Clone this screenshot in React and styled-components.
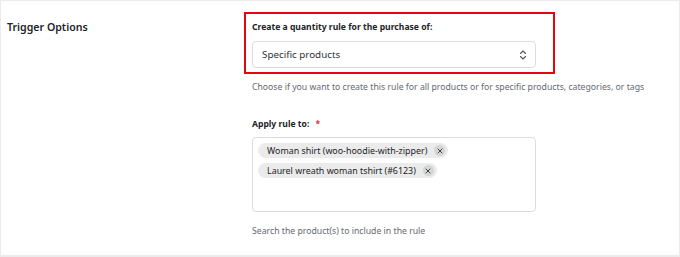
import styled, { createGlobalStyle } from 'styled-components';

const GlobalStyle = createGlobalStyle`
  html, body {
    margin: 0;
    padding: 0;
    background: #ebebeb;
  }
  body {
    font-family: "Noto Sans", "Open Sans", sans-serif;
    color: #1d2327;
  }
`;

const Card = styled.div`
  margin: 1px 0 0 1px;
  width: 678px;
  height: 254px;
  background: #fff;
  box-sizing: border-box;
  display: grid;
  grid-template-columns: 243px 1fr;
`;

const SectionTitle = styled.h2`
  margin: 0;
  padding: 19px 0 0 6px;
  font-size: 10.6px;
  line-height: 14px;
  font-weight: 600;
  color: #1d2327;
`;

const Fields = styled.div`
  padding-top: 11px;
  display: flex;
  flex-direction: column;
`;

const Highlight = styled.div`
  width: 311px;
  box-sizing: border-box;
  border: 2px solid #e30613;
  padding: 7px 0 4px 6px;
`;

const Label = styled.label`
  display: block;
  font-size: 8.6px;
  font-weight: 700;
  line-height: 12px;
  color: #1d2327;
  margin-bottom: ${(p) => p.$gap}px;
`;

const Required = styled.span`
  color: #d63638;
  margin-left: 6px;
`;

const Select = styled.div`
  width: 284px;
  height: 27px;
  box-sizing: border-box;
  border: 1px solid #dcdcde;
  border-radius: 4px;
  display: flex;
  align-items: center;
  justify-content: space-between;
  padding: 0 8px 0 9px;
  font-size: 9.8px;
  color: #2c3338;
`;

const Help = styled.p`
  margin: ${(p) => p.$top}px 0 0 8px;
  font-size: 8.7px;
  line-height: 14px;
  white-space: nowrap;
  color: #646970;
`;

const Group = styled.div`
  margin-top: ${(p) => p.$top}px;
  padding-left: 8px;
`;

const TagBox = styled.div`
  width: 284px;
  height: 75px;
  box-sizing: border-box;
  border: 1px solid #dcdcde;
  border-radius: 4px;
  padding: 5px 5px;
  display: flex;
  flex-direction: column;
  align-items: flex-start;
  gap: 5px;
`;

const Chip = styled.span`
  display: inline-flex;
  align-items: center;
  height: 15px;
  background: #ebebeb;
  border-radius: 8px;
  padding: 0 3px 0 9px;
  font-size: 8.9px;
  color: #1d2327;
  gap: 7px;
`;

const Remove = styled.span`
  width: 11px;
  height: 11px;
  border-radius: 50%;
  background: #d5d5d5;
  display: inline-flex;
  align-items: center;
  justify-content: center;
`;

function Chevrons() {
  return (
    <svg width="8" height="12" viewBox="0 0 8 12" fill="none" stroke="#50575e" strokeWidth="1.1" strokeLinecap="round" strokeLinejoin="round">
      <path d="M1.5 4.5 L4 2 L6.5 4.5" />
      <path d="M1.5 7.5 L4 10 L6.5 7.5" />
    </svg>
  );
}

function Cross() {
  return (
    <svg width="6" height="6" viewBox="0 0 6 6" stroke="#3c434a" strokeWidth="1" strokeLinecap="round">
      <path d="M1 1 L5 5 M5 1 L1 5" />
    </svg>
  );
}

const tags = ['Woman shirt (woo-hoodie-with-zipper)', 'Laurel wreath woman tshirt (#6123)'];

export default function App() {
  return (
    <>
      <GlobalStyle />
      <Card>
        <SectionTitle>Trigger Options</SectionTitle>
        <Fields>
          <Highlight>
            <Label $gap={8}>Create a quantity rule for the purchase of:</Label>
            <Select>
              <span>Specific products</span>
              <Chevrons />
            </Select>
          </Highlight>
          <Help $top={6}>
            Choose if you want to create this rule for all products or for specific products, categories, or tags
          </Help>
          <Group $top={24}>
            <Label $gap={7}>
              Apply rule to:<Required>*</Required>
            </Label>
            <TagBox>
              {tags.map((t) => (
                <Chip key={t}>
                  {t}
                  <Remove>
                    <Cross />
                  </Remove>
                </Chip>
              ))}
            </TagBox>
          </Group>
          <Help $top={12}>Search the product(s) to include in the rule</Help>
        </Fields>
      </Card>
    </>
  );
}
